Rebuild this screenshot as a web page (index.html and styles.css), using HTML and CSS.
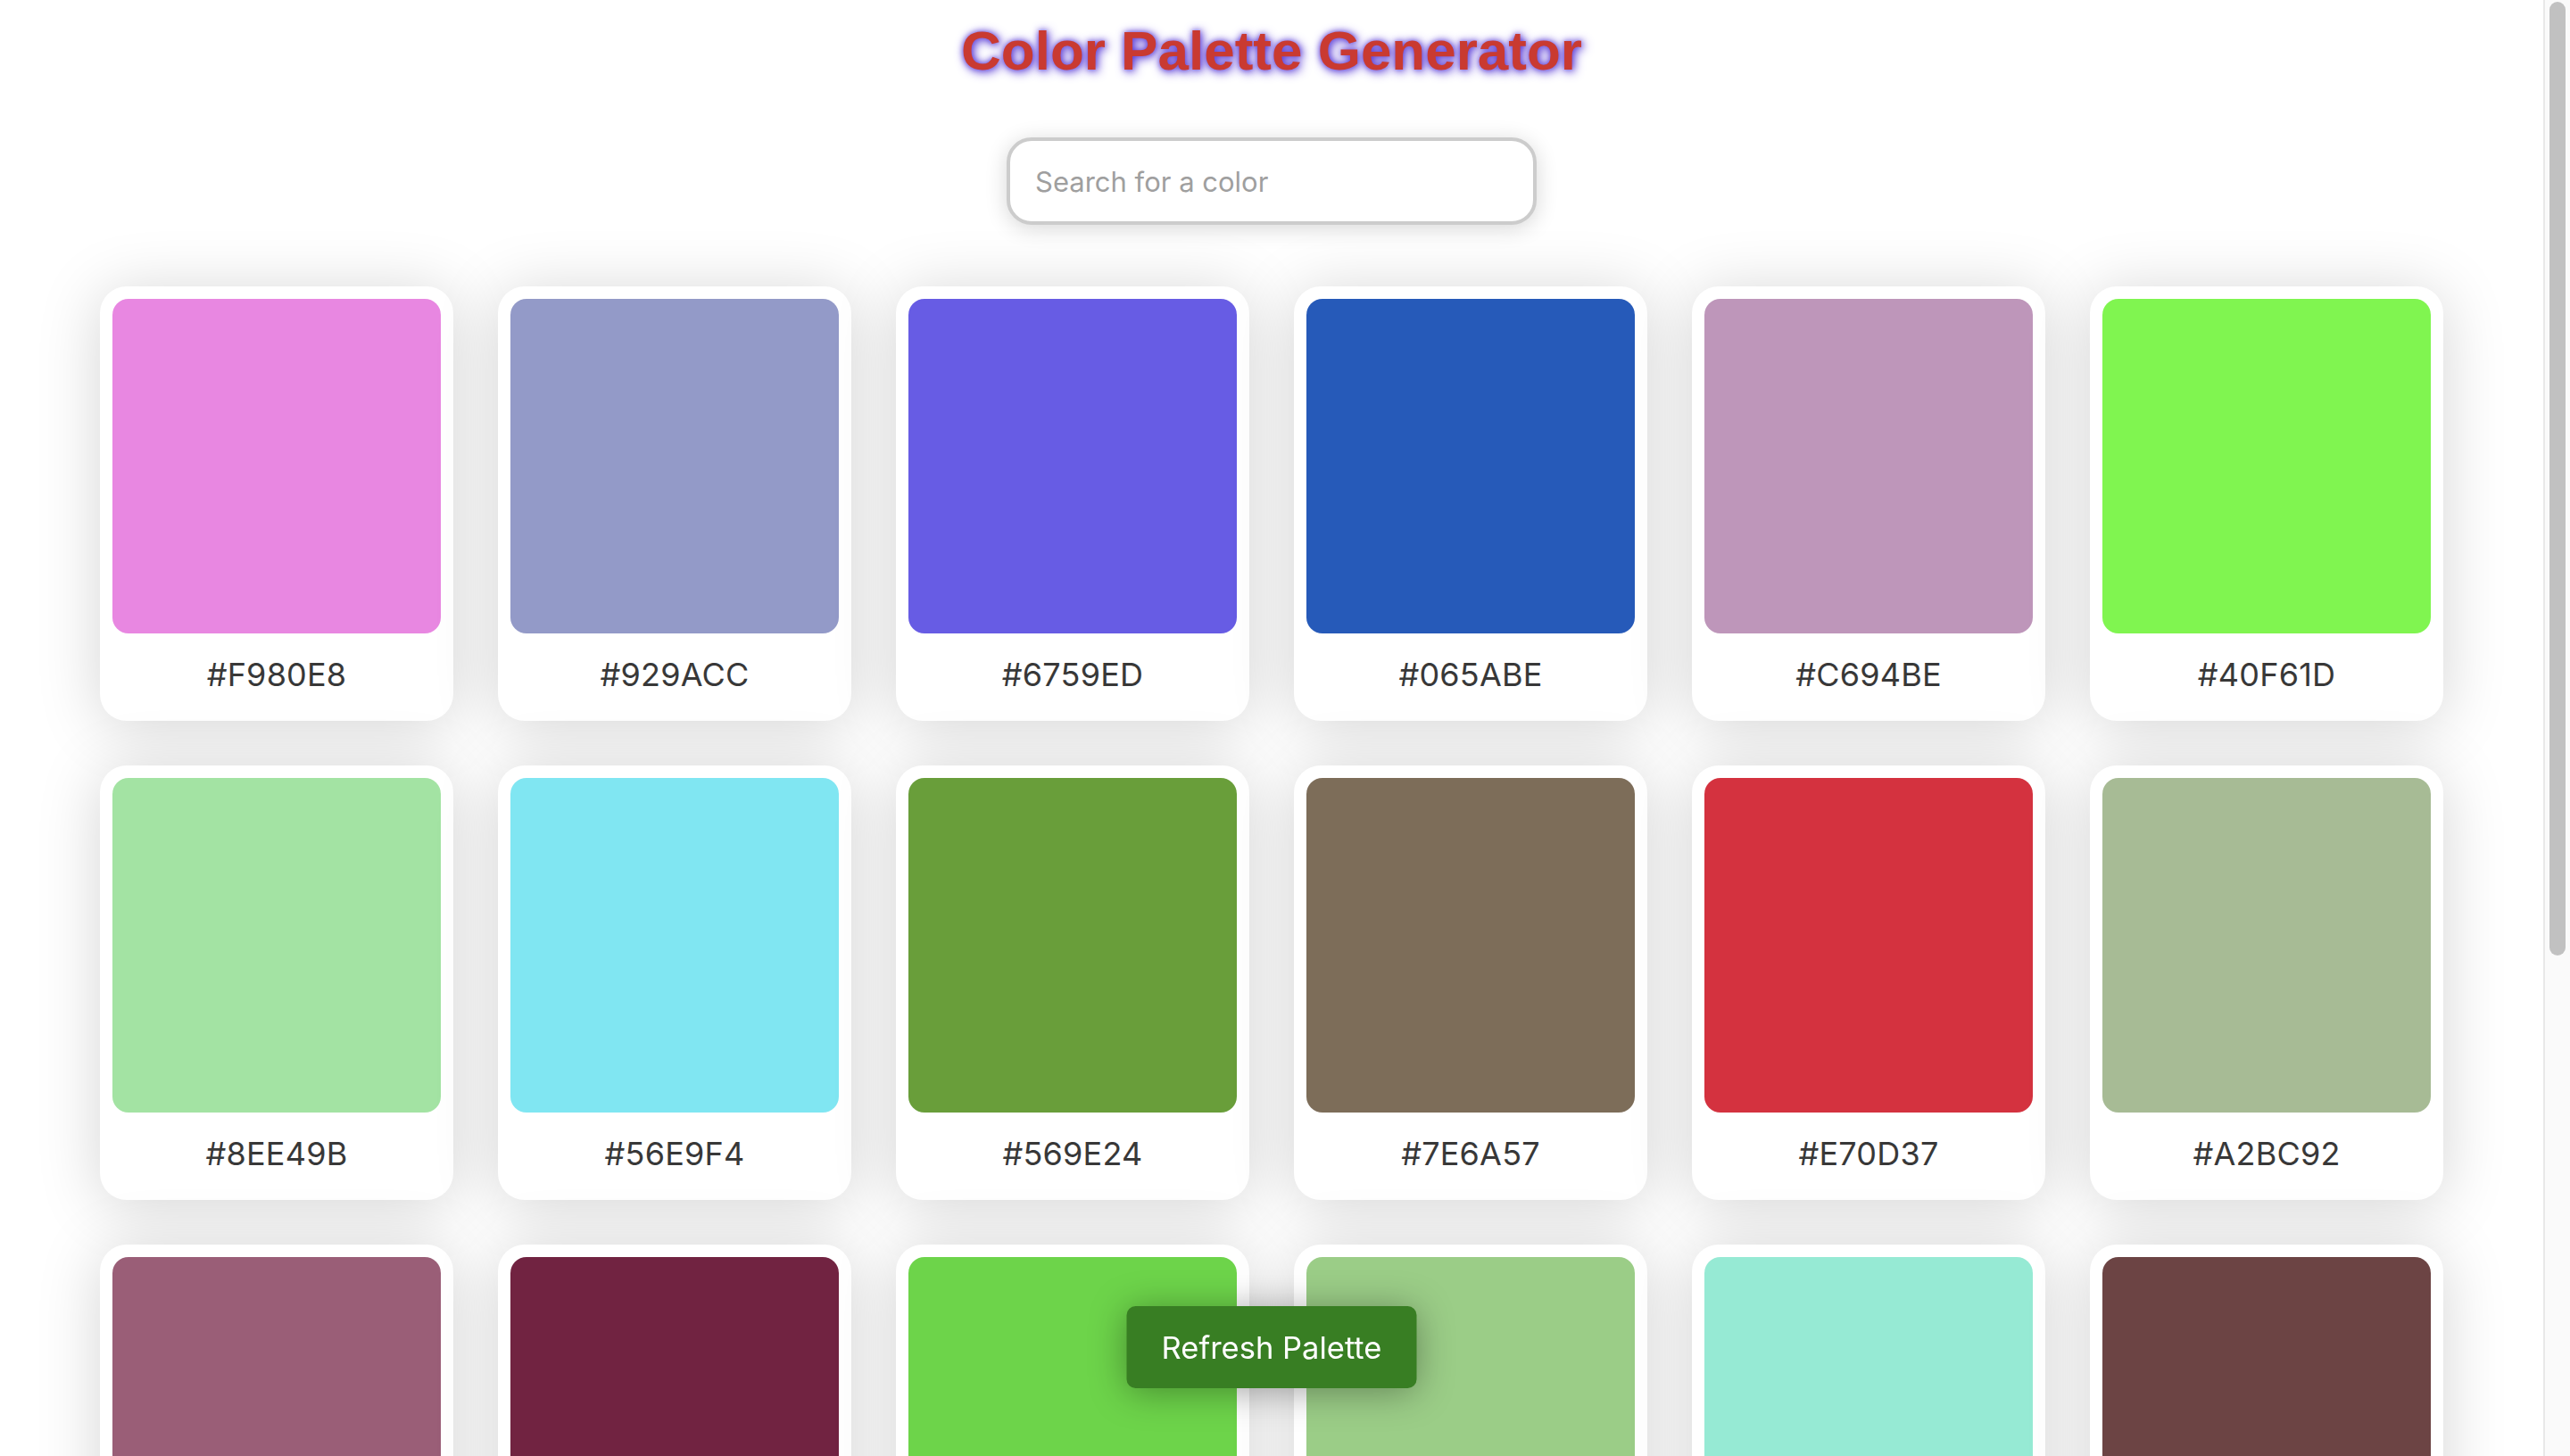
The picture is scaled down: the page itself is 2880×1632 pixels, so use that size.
FILE: index.html
```html
<!DOCTYPE html>
<html lang="en">
<head>
<meta charset="utf-8">
<title>Color Palette Generator</title>
<link rel="stylesheet" href="styles.css">
</head>
<body>
<header class="header">
  <h1 class="title">Color Palette Generator</h1>
  <input class="search" type="text" placeholder="Search for a color">
</header>
<main class="palette">
  <div class="card"><div class="swatch" style="background:#E887E1"></div><div class="hex">#F980E8</div></div>
  <div class="card"><div class="swatch" style="background:#939AC8"></div><div class="hex">#929ACC</div></div>
  <div class="card"><div class="swatch" style="background:#675CE4"></div><div class="hex">#6759ED</div></div>
  <div class="card"><div class="swatch" style="background:#265AB9"></div><div class="hex">#065ABE</div></div>
  <div class="card"><div class="swatch" style="background:#BE96BA"></div><div class="hex">#C694BE</div></div>
  <div class="card"><div class="swatch" style="background:#80F550"></div><div class="hex">#40F61D</div></div>

  <div class="card"><div class="swatch" style="background:#A3E3A3"></div><div class="hex">#8EE49B</div></div>
  <div class="card"><div class="swatch" style="background:#80E6F2"></div><div class="hex">#56E9F4</div></div>
  <div class="card"><div class="swatch" style="background:#699E3A"></div><div class="hex">#569E24</div></div>
  <div class="card"><div class="swatch" style="background:#7D6D59"></div><div class="hex">#7E6A57</div></div>
  <div class="card"><div class="swatch" style="background:#D4323F"></div><div class="hex">#E70D37</div></div>
  <div class="card"><div class="swatch" style="background:#A7BB95"></div><div class="hex">#A2BC92</div></div>

  <div class="card"><div class="swatch" style="background:#9A5E77"></div><div class="hex">#A85A78</div></div>
  <div class="card"><div class="swatch" style="background:#712341"></div><div class="hex">#7A1A42</div></div>
  <div class="card"><div class="swatch" style="background:#6DD44A"></div><div class="hex">#5ED83A</div></div>
  <div class="card"><div class="swatch" style="background:#9BCD87"></div><div class="hex">#92D07E</div></div>
  <div class="card"><div class="swatch" style="background:#96EAD4"></div><div class="hex">#8AEDD2</div></div>
  <div class="card"><div class="swatch" style="background:#6C4444"></div><div class="hex">#743E3F</div></div>

  <div class="card"><div class="swatch" style="background:#C9A14E"></div><div class="hex">#D6A03C</div></div>
  <div class="card"><div class="swatch" style="background:#4E8FC7"></div><div class="hex">#3A8FD2</div></div>
  <div class="card"><div class="swatch" style="background:#B75A9E"></div><div class="hex">#C250A4</div></div>
  <div class="card"><div class="swatch" style="background:#5FB7A2"></div><div class="hex">#4ABBA0</div></div>
  <div class="card"><div class="swatch" style="background:#E0B6A0"></div><div class="hex">#EEB49A</div></div>
  <div class="card"><div class="swatch" style="background:#3E4A7A"></div><div class="hex">#2F4680</div></div>
</main>
<button class="refresh" type="button">Refresh Palette</button>
<div class="scrollbar" aria-hidden="true"><div class="scrollbar-thumb"></div></div>
</body>
</html>
```

FILE: styles.css
```css
html {
  background: #ffffff;
}

body {
  margin: 0 30px 0 0;
  font-family: Inter, "Noto Sans", "Liberation Sans", sans-serif;
  color: #444444;
  background: #ffffff;
}

.header {
  display: flex;
  flex-direction: column;
  align-items: center;
}

.title {
  margin: 21px 0 0;
  font-family: "Liberation Sans", Arial, sans-serif;
  font-weight: 700;
  font-size: 62px;
  line-height: 71px;
  color: #c93a31;
  text-shadow: 2px 2px 12px #4f2fd4, 0 0 6px rgba(95, 65, 215, 0.85);
}

.search {
  box-sizing: border-box;
  margin-top: 62px;
  width: 594px;
  height: 98px;
  padding: 0 28px;
  border: 4px solid #cccccc;
  border-radius: 28px;
  background: #ffffff;
  font-family: Inter, "Noto Sans", sans-serif;
  font-size: 31px;
  color: #333333;
  box-shadow: 0 4px 24px rgba(0, 0, 0, 0.16);
  outline: none;
}

.search::placeholder {
  color: #9f9f9f;
}

.palette {
  display: grid;
  grid-template-columns: repeat(6, 396px);
  gap: 50px;
  justify-content: center;
  margin-top: 69px;
  padding-bottom: 68px;
}

.card {
  box-sizing: border-box;
  height: 487px;
  padding: 14px;
  background: #ffffff;
  border-radius: 30px;
  box-shadow: 0 6px 70px rgba(0, 0, 0, 0.17);
  display: flex;
  flex-direction: column;
}

.swatch {
  height: 375px;
  border-radius: 18px;
}

.hex {
  flex: 1;
  display: flex;
  align-items: center;
  justify-content: center;
  padding-top: 8px;
  font-size: 36px;
  color: #383838;
  letter-spacing: 0.2px;
}

.refresh {
  position: fixed;
  left: calc(50% - 15px);
  bottom: 76px;
  transform: translateX(-50%);
  width: 325px;
  height: 92px;
  border: none;
  border-radius: 10px;
  background: #387e23;
  color: #ffffff;
  font-family: Inter, "Noto Sans", sans-serif;
  font-size: 34.5px;
  box-shadow: 0 4px 40px rgba(0, 0, 0, 0.35);
  cursor: pointer;
}

.scrollbar {
  position: fixed;
  top: 0;
  right: 0;
  bottom: 0;
  width: 28px;
  background: #fafafa;
  border-left: 2px solid #e8e8e8;
}

.scrollbar-thumb {
  margin: 2px 5px 0 5px;
  height: 1069px;
  border-radius: 9px;
  background: #c1c1c1;
}
```
